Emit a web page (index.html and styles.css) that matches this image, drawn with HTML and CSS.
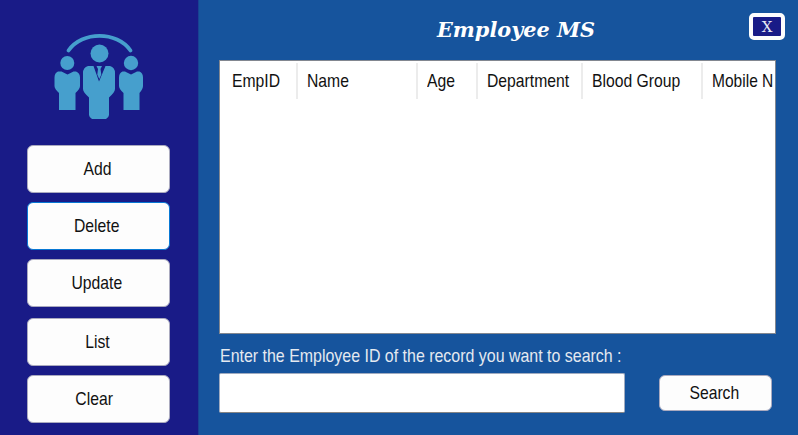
FILE: index.html
```
<!DOCTYPE html>
<html lang="en">
<head>
<meta charset="utf-8">
<title>Employee MS</title>
<link rel="stylesheet" href="styles.css">
</head>
<body>
<div class="window">
  <aside class="sidebar">
    <svg class="logo" viewBox="0 0 120 110" width="120" height="110" aria-hidden="true">
      <path class="arc" d="M28.500 30.500C42 11 77 11 90.500 30.500"/>
      <circle cx="59.500" cy="33.500" r="9"/>
      <circle cx="27.300" cy="43" r="7"/>
      <circle cx="91" cy="43" r="7.200"/>
      <path d="M18 51.500h3.500l6 3 6-3H36q4 1.500 4 6V66q0 3-4.500 7V90H19V73q-4.500-4-4.500-7v-8.500q0-4.500 3.500-6z"/>
      <path d="M82.500 51.500H85l6 3 6-3h2.500q3.500 1.500 3.500 6V66q0 3-3.500 7V90h-16V73q-4.500-4-4.500-7v-8.500q0-4.500 3.500-6z"/>
      <path d="M48 46h5.500L59 61.500 65.500 46H70q5 1.500 5 7v16q0 3-6 8.500V95q0 2-3 4H52q-3-2-3-4V77.500q-6-5.500-6-8.500V53q0-5.500 5-7z"/>
      <path d="M56.500 46h5.500l-1.500 3 .8 5.500-2 4.500-2-4.500.7-5.500z"/>
    </svg>
    <nav class="menu">
      <button class="btn"><span class="txt">Add</span></button>
      <button class="btn focused"><span class="txt">Delete</span></button>
      <button class="btn"><span class="txt">Update</span></button>
      <button class="btn lower"><span class="txt">List</span></button>
      <button class="btn clear"><span class="txt">Clear</span></button>
    </nav>
  </aside>
  <main class="content">
    <header class="titlebar">
      <h1 class="title">Employee MS</h1>
      <button class="close">X</button>
    </header>
    <section class="list">
      <div class="columns">
        <div class="col id"><span class="txt">EmpID</span></div>
        <div class="col name"><span class="txt">Name</span></div>
        <div class="col age"><span class="txt">Age</span></div>
        <div class="col dept"><span class="txt">Department</span></div>
        <div class="col blood"><span class="txt">Blood Group</span></div>
        <div class="col mobile"><span class="txt">Mobile N</span></div>
      </div>
    </section>
    <label class="prompt" for="search"><span class="txt">Enter the Employee ID of the record you want to search :</span></label>
    <div class="search-row">
      <input class="field" id="search" type="text">
      <button class="btn search"><span class="txt">Search</span></button>
    </div>
  </main>
</div>
</body>
</html>
```
FILE: styles.css
```
* { box-sizing: border-box; }
body {
  margin: 0;
  font-family: "Liberation Sans", Arial, sans-serif;
  font-size: 18.5px;
  color: #111;
}
button { font: inherit; color: inherit; padding: 0; }
.window {
  display: flex;
  width: 798px;
  height: 435px;
  overflow: hidden;
  background: #16549d;
}
.sidebar {
  flex: none;
  width: 199px;
  background: #191b87;
  border-right: 1px solid #184292;
}
.logo {
  display: block;
  margin: 20px 0 0 40px;
  fill: #469fcd;
}
.arc {
  fill: none;
  stroke: #469fcd;
  stroke-width: 3.8;
  stroke-linecap: round;
}
.menu {
  display: flex;
  flex-direction: column;
  gap: 9px;
  margin: 15px 0 0 27px;
}
.btn {
  display: flex;
  align-items: center;
  justify-content: center;
  width: 143px;
  height: 48px;
  background: #fdfdfd;
  border: 1px solid #aaaabf;
  border-radius: 6px;
}
.btn.focused { border-color: #0878d4; }
.btn.lower { margin-top: 2px; }
.txt {
  display: inline-block;
  white-space: nowrap;
  line-height: 22px;
  transform: scaleX(.85);
}
.menu .txt { margin-right: 3px; }
.menu .clear .txt { margin-right: 8px; }
.content { flex: 1; padding-left: 20px; }
.titlebar {
  display: flex;
  height: 60px;
}
.title {
  flex: none;
  width: 312px;
  margin: 16px 0 0 218px;
  font: italic bold 21px/28px "DejaVu Serif", serif;
  color: #fff;
  white-space: nowrap;
  transform: scaleX(.99);
  transform-origin: 0 50%;
}
.close {
  flex: none;
  width: 36px;
  height: 27px;
  margin-top: 13px;
  background: #191b87;
  border: 4px solid #fdfdfd;
  border-radius: 5px;
  color: #e8e8f4;
  font: 15px/18px "DejaVu Serif", serif;
  padding-top: 1px;
}
.list {
  width: 557px;
  height: 274px;
  background: #fff;
  border: 1px solid #828790;
  overflow: hidden;
}
.columns {
  display: flex;
  height: 36px;
  margin-top: 2px;
}
.col {
  flex: none;
  border-right: 2px solid #ececec;
  padding: 7px 0 0 9px;
}
.col .txt, .prompt .txt { transform-origin: 0 50%; }
.id { width: 78px; padding-left: 12px; }
.name { width: 120px; }
.age { width: 60px; }
.dept { width: 105px; }
.blood { width: 120px; }
.mobile { width: 72px; border-right: 0; }
.col.mobile .txt { transform: scaleX(.84); }
.prompt {
  display: block;
  height: 39px;
  padding: 11px 0 0 1px;
  color: #e4e9f0;
}
.prompt .txt { transform: scaleX(.862); }
.search-row {
  display: flex;
  align-items: flex-start;
}
.field {
  width: 406px;
  height: 40px;
  background: #fff;
  border: 1px solid #a0abc0;
  border-bottom-color: #858585;
  border-radius: 2px;
  font: inherit;
}
.btn.search {
  width: 113px;
  height: 36px;
  margin: 2px 0 0 34px;
}
.search .txt { margin-right: 3px; }
```
